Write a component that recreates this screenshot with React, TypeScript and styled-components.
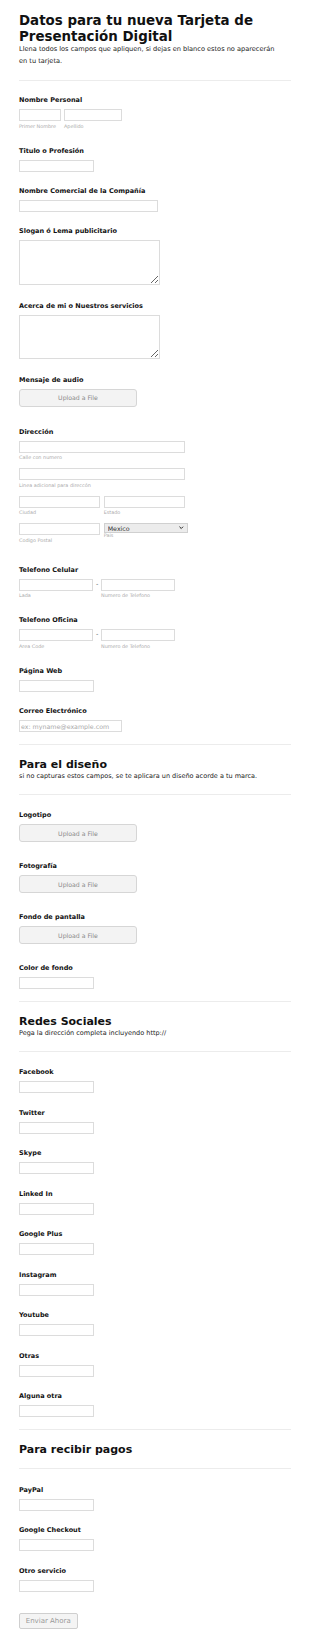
import React from 'react';
import styled, { createGlobalStyle } from 'styled-components';

const GlobalStyle = createGlobalStyle`
  body {
    margin: 0;
    background: #fff;
    font-family: "DejaVu Sans", Verdana, sans-serif;
    color: #111;
  }
`;

const Form = styled.form`
  padding: 13px 19px 12px;
`;

const Header = styled.div`
  padding-bottom: 13px;
  border-bottom: 1px solid #ececec;
  margin-bottom: 15px;
`;

const Title = styled.h1`
  margin: 0;
  font-size: 13.4px;
  line-height: 16px;
  font-weight: bold;
  color: #111;
`;

const HeaderSub = styled.div`
  max-width: 263px;
  margin-top: -1px;
  font-size: 6.6px;
  line-height: 11.5px;
  color: #222;
`;

/* separador de seccion con titulo */
const SectionBreak = styled.div<{ $sub?: boolean }>`
  border-top: 1px solid #ececec;
  border-bottom: 1px solid #ececec;
  padding: 12.5px 0 ${p => (p.$sub ? 13 : 12.5)}px;
  margin-bottom: 16.5px;
`;

const SectionTitle = styled.h2`
  margin: 0;
  font-size: 11px;
  line-height: 13px;
  font-weight: bold;
  color: #111;
`;

const SectionSub = styled.div`
  margin-top: 1px;
  font-size: 6.5px;
  line-height: 9px;
  color: #222;
`;

const Field = styled.div<{ $pb?: number }>`
  padding-bottom: ${p => p.$pb ?? 15.5}px;
`;

const Label = styled.label`
  display: block;
  font-size: 6.5px;
  font-weight: bold;
  line-height: 8px;
  margin-bottom: 5px;
  color: #111;
`;

const TextInput = styled.input<{ $w: number }>`
  display: block;
  box-sizing: border-box;
  width: ${p => p.$w}px;
  height: 12px;
  margin: 0;
  padding: 0 1px;
  border: 1px solid #dcdcdc;
  border-radius: 0;
  background: #fff;
  font-family: inherit;
  font-size: 6.3px;
  color: #333;
  outline: none;

  &::placeholder {
    color: #aaa;
  }
`;

const TextArea = styled.textarea<{ $h: number }>`
  display: block;
  box-sizing: border-box;
  width: 141px;
  height: ${p => p.$h}px;
  margin: 0;
  padding: 1px;
  border: 1px solid #dcdcdc;
  border-radius: 0;
  font-family: inherit;
  font-size: 6.3px;
  outline: none;
`;

const UploadButton = styled.button`
  display: block;
  box-sizing: border-box;
  width: 118px;
  height: 18px;
  margin: 0;
  padding: 0;
  border: 1px solid #d6d6d6;
  border-radius: 3px;
  background: #f3f3f3;
  font-family: inherit;
  font-size: 6.2px;
  color: #8a8a8a;
`;

const Row = styled.div<{ $gap: number }>`
  display: flex;
  align-items: flex-start;
  gap: ${p => p.$gap}px;
`;

const Stack = styled.div<{ $gap?: number }>`
  display: flex;
  flex-direction: column;
  gap: ${p => p.$gap ?? 7}px;
`;

const Column = styled.div`
  display: flex;
  flex-direction: column;
`;

const SubLabel = styled.span<{ $tight?: boolean }>`
  display: block;
  margin-top: ${p => (p.$tight ? -1.5 : 1.5)}px;
  font-size: 4.9px;
  line-height: 7px;
  color: #aaa;
`;

const Dash = styled.span`
  display: block;
  width: 7.6px;
  height: 12px;
  line-height: 11px;
  text-align: center;
  font-size: 6.5px;
  color: #555;
`;

const SelectWrap = styled.div`
  position: relative;
  width: 84.3px;
  height: 10.3px;
`;

const Select = styled.select`
  display: block;
  box-sizing: border-box;
  width: 100%;
  height: 100%;
  margin: 0;
  padding: 0 0 0 3px;
  border: 1px solid #d0d0d0;
  border-radius: 0;
  background: #ececec;
  appearance: none;
  font-family: inherit;
  font-size: 6.3px;
  color: #333;
  outline: none;
`;

const Chevron = styled.svg`
  position: absolute;
  right: 4px;
  top: 3px;
  width: 4.5px;
  height: 3.5px;
  pointer-events: none;
`;

const SubmitButton = styled.button`
  display: block;
  box-sizing: border-box;
  width: 58.5px;
  height: 16px;
  margin: 0;
  padding: 0;
  border: 1px solid #cfcfcf;
  border-radius: 2px;
  background: #f4f4f4;
  font-family: inherit;
  font-size: 7px;
  color: #999;
`;

const social = ['Facebook', 'Twitter', 'Skype', 'Linked In', 'Google Plus', 'Instagram', 'Youtube', 'Otras', 'Alguna otra'];
const pagos = ['PayPal', 'Google Checkout', 'Otro servicio'];

const SimpleField: React.FC<{ label: string; w?: number; pb?: number; placeholder?: string }> = ({ label, w = 75, pb, placeholder }) => (
  <Field $pb={pb}>
    <Label>{label}</Label>
    <TextInput $w={w} placeholder={placeholder} />
  </Field>
);

const UploadField: React.FC<{ label: string; pb?: number }> = ({ label, pb = 20 }) => (
  <Field $pb={pb}>
    <Label>{label}</Label>
    <UploadButton type="button">Upload a File</UploadButton>
  </Field>
);

const PhoneField: React.FC<{ label: string; area: string; pb?: number }> = ({ label, area, pb }) => (
  <Field $pb={pb}>
    <Label>{label}</Label>
    <Row $gap={0}>
      <Column>
        <TextInput $w={74.4} />
        <SubLabel>{area}</SubLabel>
      </Column>
      <Dash>-</Dash>
      <Column>
        <TextInput $w={74.4} />
        <SubLabel>Numero de Telefono</SubLabel>
      </Column>
    </Row>
  </Field>
);

export default function App() {
  return (
    <>
      <GlobalStyle />
      <Form onSubmit={e => e.preventDefault()}>
        <Header>
          <Title>Datos para tu nueva Tarjeta de Presentación Digital</Title>
          <HeaderSub>
            Llena todos los campos que apliquen, si dejas en blanco estos no aparecerán en tu tarjeta.
          </HeaderSub>
        </Header>

        <Field $pb={17}>
          <Label>Nombre Personal</Label>
          <Row $gap={2.6}>
            <Column>
              <TextInput $w={42.4} />
              <SubLabel>Primer Nombre</SubLabel>
            </Column>
            <Column>
              <TextInput $w={58.4} />
              <SubLabel>Apellido</SubLabel>
            </Column>
          </Row>
        </Field>

        <SimpleField label="Titulo o Profesión" pb={15} />
        <SimpleField label="Nombre Comercial de la Compañía" w={138.5} pb={15} />

        <Field $pb={17}>
          <Label>Slogan ó Lema publicitario</Label>
          <TextArea $h={45} />
        </Field>

        <Field $pb={17}>
          <Label>Acerca de mi o Nuestros servicios</Label>
          <TextArea $h={44} />
        </Field>

        <UploadField label="Mensaje de audio" pb={21} />

        <Field $pb={22}>
          <Label>Dirección</Label>
          <Stack>
            <Column>
              <TextInput $w={166.4} />
              <SubLabel>Calle con numero</SubLabel>
            </Column>
            <Column>
              <TextInput $w={166.4} />
              <SubLabel>Linea adicional para direccón</SubLabel>
            </Column>
            <Row $gap={3.3}>
              <Column>
                <TextInput $w={81.4} />
                <SubLabel>Ciudad</SubLabel>
              </Column>
              <Column>
                <TextInput $w={81.7} />
                <SubLabel>Estado</SubLabel>
              </Column>
            </Row>
            <Row $gap={3.3}>
              <Column>
                <TextInput $w={81.4} />
                <SubLabel>Codigo Postal</SubLabel>
              </Column>
              <Column>
                <SelectWrap>
                  <Select defaultValue="Mexico">
                    <option>Mexico</option>
                  </Select>
                  <Chevron viewBox="0 0 10 7">
                    <path d="M1 1.2 L5 5.2 L9 1.2" fill="none" stroke="#222" strokeWidth="2.2" />
                  </Chevron>
                </SelectWrap>
                <SubLabel $tight>Pais</SubLabel>
              </Column>
            </Row>
          </Stack>
        </Field>

        <PhoneField label="Telefono Celular" area="Lada" pb={17} />
        <PhoneField label="Telefono Oficina" area="Area Code" pb={17.5} />

        <SimpleField label="Página Web" pb={15} />
        <SimpleField label="Correo Electrónico" w={103.4} pb={12} placeholder="ex: myname@example.com" />

        <SectionBreak $sub>
          <SectionTitle>Para el diseño</SectionTitle>
          <SectionSub>si no capturas estos campos, se te aplicara un diseño acorde a tu marca.</SectionSub>
        </SectionBreak>

        <UploadField label="Logotipo" />
        <UploadField label="Fotografía" />
        <UploadField label="Fondo de pantalla" />
        <SimpleField label="Color de fondo" pb={12} />

        <SectionBreak $sub>
          <SectionTitle>Redes Sociales</SectionTitle>
          <SectionSub>Pega la dirección completa incluyendo http://</SectionSub>
        </SectionBreak>

        {social.map((s, i) => (
          <SimpleField key={s} label={s} pb={i === social.length - 1 ? 12 : 15.5} />
        ))}

        <SectionBreak>
          <SectionTitle>Para recibir pagos</SectionTitle>
        </SectionBreak>

        {pagos.map((s, i) => (
          <SimpleField key={s} label={s} pb={i === pagos.length - 1 ? 21 : 15.5} />
        ))}

        <SubmitButton type="submit">Enviar Ahora</SubmitButton>
      </Form>
    </>
  );
}
